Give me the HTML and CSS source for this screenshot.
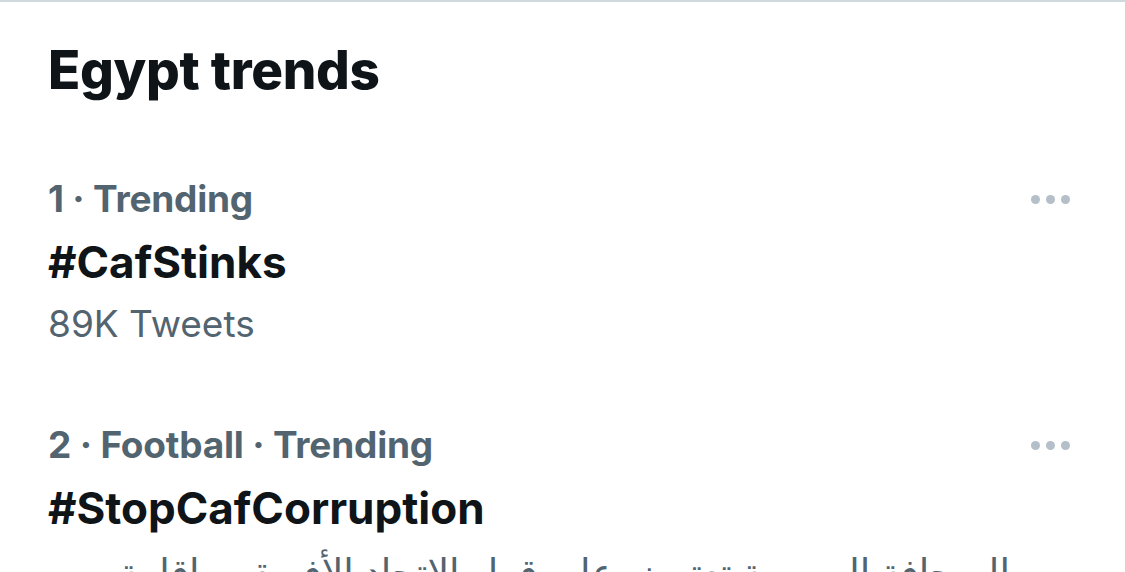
FILE: index.html
```html
<!DOCTYPE html>
<html lang="en">
<head>
  <meta charset="UTF-8" />
  <meta name="viewport" content="width=device-width, initial-scale=1.0" />
  <title>Egypt trends</title>
  <link rel="stylesheet" href="styles.css">
</head>
<body>
  <div class="panel">
    <h1>Egypt trends</h1>

    <div class="trend">
      <div class="trend-top">
        <span class="meta">1 · Trending</span>
        <span class="more"><i></i><i></i><i></i></span>
      </div>
      <div class="tag">#CafStinks</div>
      <div class="count">89K Tweets</div>
    </div>

    <div class="trend">
      <div class="trend-top">
        <span class="meta">2 · Football · Trending</span>
        <span class="more"><i></i><i></i><i></i></span>
      </div>
      <div class="tag">#StopCafCorruption</div>
      <div class="desc" dir="rtl">الصحافة المصرية تعترض على قرار الاتحاد الأفريقي بإقامة</div>
    </div>
  </div>
</body>
</html>
```

FILE: styles.css
```css
body {
  margin: 0;
  background: #fff;
  font-family: Inter, "Noto Sans", sans-serif;
  color: #0f1419;
  overflow: hidden;
}
.panel {
  border-top: 2px solid #cfd9de;
  padding: 0 55px 0 48px;
}
h1 {
  margin: 0;
  padding-top: 30px;
  font-size: 53px;
  line-height: 76px;
  font-weight: 800;
  letter-spacing: -0.3px;
}
.trend {
  padding-top: 60px;
}
.trend-top {
  display: flex;
  justify-content: space-between;
  align-items: center;
}
.meta {
  font-size: 37px;
  line-height: 62px;
  font-weight: 700;
  color: #536471;
  letter-spacing: -0.2px;
}
.more {
  display: flex;
  gap: 6px;
}
.more i {
  width: 9px;
  height: 9px;
  border-radius: 50%;
  background: #b4bfc9;
}
.tag {
  font-size: 44px;
  line-height: 64px;
  font-weight: 700;
}
.count {
  font-size: 37px;
  line-height: 60px;
  color: #536471;
}
.desc {
  font-family: "Noto Sans", "DejaVu Sans", sans-serif;
  font-size: 38px;
  line-height: 62px;
  color: #536471;
  white-space: nowrap;
  text-align: right;
  padding-right: 60px;
}
```
